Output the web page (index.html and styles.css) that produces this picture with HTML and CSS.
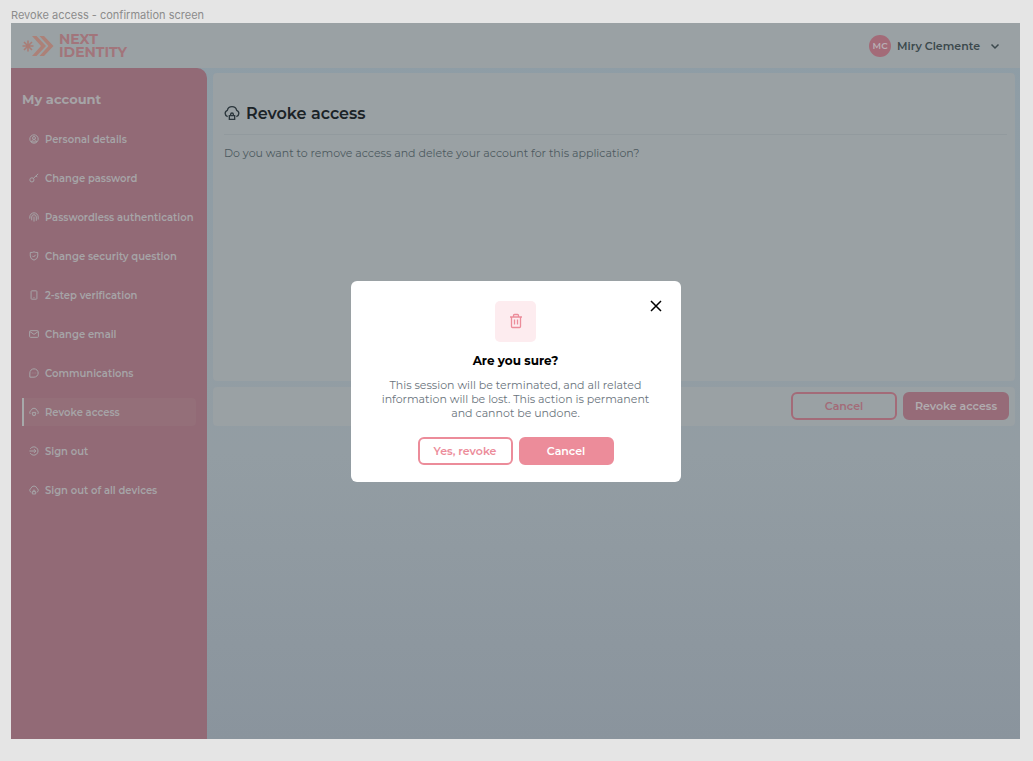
FILE: index.html
```html
<!DOCTYPE html>
<html lang="en">
<head>
<meta charset="utf-8">
<meta name="viewport" content="width=device-width, initial-scale=1">
<title>Revoke access</title>
<link rel="stylesheet" href="styles.css">
</head>
<body>
<svg class="sprite" aria-hidden="true">
  <symbol id="cloud-lock" viewBox="0 0 24 24"><path d="M5.500 17.500A5 5 0 0 1 5 8a7.200 7.200 0 0 1 14 0 5 5 0 0 1-.5 9.500M8 16h8v5.500H8zM10 16v-2a2 2 0 0 1 4 0v2"/></symbol>
  <symbol id="cloud-key" viewBox="0 0 24 24"><path d="M3.500 17A5 5 0 0 1 5 8.500a7.200 7.200 0 0 1 14 0 5 5 0 0 1 1.500 8.500M8 13h8v4a4 4 0 0 1-8 0zM12 16v2"/></symbol>
  <symbol id="user" viewBox="0 0 24 24"><circle cx="12" cy="12" r="10"/><circle cx="12" cy="9.500" r="3.500"/><path d="M6 19c0-7 12-7 12 0z"/></symbol>
  <symbol id="key" viewBox="0 0 24 24"><circle cx="7" cy="16.500" r="5"/><path d="M10.500 13 22 2M17 7l3 3"/></symbol>
  <symbol id="finger" viewBox="0 0 24 24"><path d="M2 16v-4a10 10 0 0 1 20 0v6M6.500 20v-8a5.500 5.500 0 0 1 11 0v9M12 11v12"/></symbol>
  <symbol id="shield" viewBox="0 0 24 24"><path d="M3 3.500Q8 4 12 2q4 2 9 1.500V12q0 7-9 10-9-3-9-10zM8 11.500l3 3 5-5.500"/></symbol>
  <symbol id="phone" viewBox="0 0 24 24"><rect x="5" y="2" width="14" height="20" rx="1.500"/><path d="M11 18h2"/></symbol>
  <symbol id="mail" viewBox="0 0 24 24"><rect x="1.500" y="4" width="21" height="16" rx="2"/><path d="m2 6 10 7 10-7"/></symbol>
  <symbol id="chat" viewBox="0 0 24 24"><path d="M2 22V12a10 10 0 1 1 10 10zM7 12h1M11.500 12h1M16 12h1"/></symbol>
  <symbol id="exit" viewBox="0 0 24 24"><path d="M3 7a10 10 0 1 1 0 10M1 12h15M12 7.500l4.500 4.500-4.500 4.500"/></symbol>
</svg>
<p class="frame-title">Revoke access - confirmation screen</p>
<div class="screen">
  <header class="topbar">
    <a class="logo" href="#" aria-label="Next Identity">
      <svg class="mark" viewBox="0 0 32 22" aria-hidden="true">
        <g stroke="#a97d76" stroke-width="1.600"><path d="M6 5.500v11M.5 11h11M2 7l8 8M10 7l-8 8"/></g>
        <path fill="#ac8178" d="M10 1h4.500L24 11l-9.500 10H10l9-10zM17.500 1H22l9.500 10L22 21h-4.500l9-10z"/>
      </svg>
      <span class="wordmark"><span>NEXT</span><span>IDENTITY</span></span>
    </a>
    <button class="profile" type="button"><span class="avatar">MC</span>Miry Clemente<svg class="chevron" viewBox="0 0 10 10" aria-hidden="true"><path d="m1.500 3.500 3.500 3.500 3.500-3.500"/></svg></button>
  </header>
  <div class="layout">
    <nav class="sidebar" aria-label="My account">
      <h2>My account</h2>
      <ul>
        <li><a href="#"><svg><use href="#user"/></svg>Personal details</a></li>
        <li><a href="#"><svg><use href="#key"/></svg>Change password</a></li>
        <li><a href="#"><svg><use href="#finger"/></svg>Passwordless authentication</a></li>
        <li><a href="#"><svg><use href="#shield"/></svg>Change security question</a></li>
        <li><a href="#"><svg><use href="#phone"/></svg>2-step verification</a></li>
        <li><a href="#"><svg><use href="#mail"/></svg>Change email</a></li>
        <li><a href="#"><svg><use href="#chat"/></svg>Communications</a></li>
        <li><a class="active" href="#" aria-current="page"><svg><use href="#cloud-key"/></svg>Revoke access</a></li>
        <li><a href="#"><svg><use href="#exit"/></svg>Sign out</a></li>
        <li><a href="#"><svg><use href="#cloud-lock"/></svg>Sign out of all devices</a></li>
      </ul>
    </nav>
    <main class="content">
      <section class="panel">
        <h1><svg><use href="#cloud-lock"/></svg>Revoke access</h1>
        <p>Do you want to remove access and delete your account for this application?</p>
      </section>
      <div class="actions">
        <button class="btn outline" type="button">Cancel</button>
        <button class="btn solid" type="button">Revoke access</button>
      </div>
    </main>
  </div>
  <div class="overlay">
    <div class="dialog" role="dialog" aria-modal="true" aria-labelledby="dialog-title">
      <button class="close" type="button" aria-label="Close"><svg viewBox="0 0 12 12"><path d="m1 1 10 10M11 1 1 11"/></svg></button>
      <div class="tile"><svg viewBox="0 0 14 16" aria-hidden="true"><path d="M1 4h12M2.500 4v9.500q0 1 1 1h7q1 0 1-1V4M4.500 4V2.500q0-1 1-1h3q1 0 1 1V4M5.500 6.500v5M8.500 6.500v5"/></svg></div>
      <h2 id="dialog-title">Are you sure?</h2>
      <p>This session will be terminated, and all related information will be lost. This action is permanent and cannot be undone.</p>
      <div class="choices">
        <button class="btn outline" type="button">Yes, revoke</button>
        <button class="btn solid" type="button">Cancel</button>
      </div>
    </div>
  </div>
</div>
</body>
</html>
```
FILE: styles.css
```css
* { box-sizing: border-box; }
body {
  margin: 0;
  min-height: 100vh;
  display: flex;
  flex-direction: column;
  padding: 8px 13px 22px 11px;
  background: #e5e5e5;
  font-family: Montserrat, Inter, sans-serif;
  font-size: 11px;
}
h1, h2, p, ul { margin: 0; padding: 0; }
ul { list-style: none; }
a { color: inherit; text-decoration: none; }
button { font: inherit; cursor: pointer; }
svg { fill: none; stroke: currentColor; stroke-width: 2; flex: none; }
.sprite { position: absolute; width: 0; height: 0; }
.frame-title { font: 11px/15px Inter, sans-serif; color: #8c8c8c; }
.screen {
  position: relative;
  flex: 1;
  display: flex;
  flex-direction: column;
  background: linear-gradient(#8e9da6, #939da3 60%, #8a949d);
}
.topbar {
  height: 45px;
  display: flex;
  align-items: center;
  justify-content: space-between;
  padding: 0 20px 0 11px;
  background: #9aa1a4;
}
.logo { display: flex; align-items: center; gap: 5px; }
.mark { width: 32px; height: 22px; stroke: none; }
.wordmark { display: grid; font-size: 14px; line-height: 13px; font-weight: 700; color: #a2757b; }
.profile {
  display: flex;
  align-items: center;
  gap: 6px;
  padding: 0;
  border: 0;
  background: none;
  color: #3c494d;
  font-weight: 600;
}
.avatar {
  width: 22px;
  height: 22px;
  border-radius: 50%;
  background: #a36b78;
  color: #b9b0b5;
  font-size: 9px;
  line-height: 22px;
  text-align: center;
}
.chevron { width: 10px; height: 10px; margin-left: 4px; }
.chevron path { stroke-width: 1.5px; }
.layout { flex: 1; display: flex; }
.sidebar {
  flex: 0 0 196px;
  padding: 21px 11px;
  border-radius: 0 10px 0 0;
  background: #926a76;
  color: #a6a4a7;
}
.sidebar h2 { font-size: 13px; line-height: 20px; font-weight: 700; margin-bottom: 16px; }
.sidebar ul { display: grid; gap: 11px; }
.sidebar a {
  display: flex;
  align-items: center;
  gap: 6px;
  height: 28px;
  padding-left: 5px;
  border-left: 2px solid transparent;
  border-radius: 0 4px 4px 0;
  font-size: 10px;
  font-weight: 600;
  white-space: nowrap;
}
.sidebar svg { width: 10px; height: 10px; stroke-width: 2.4; }
.sidebar .active { background: #946f79; border-left-color: #a7a9aa; }
.content {
  flex: 1;
  display: flex;
  flex-direction: column;
  gap: 6px;
  padding: 5px 5px 0 6px;
}
.panel, .actions { background: #9aa1a4; border-radius: 4px; }
.panel { min-height: 308px; padding: 26px 8px 12px 11px; }
.panel h1 {
  display: flex;
  align-items: center;
  gap: 6px;
  height: 36px;
  padding-bottom: 7px;
  margin-bottom: 10px;
  border-bottom: 1px solid #929a9e;
  font-size: 16px;
  font-weight: 600;
  color: #1b2327;
}
.panel h1 svg { width: 16px; height: 16px; color: #2b363c; }
.panel p { line-height: 16px; color: #4d5a60; }
.actions { display: flex; justify-content: flex-end; gap: 6px; padding: 5px 6px 6px; }
.btn {
  width: 106px;
  height: 28px;
  padding: 0;
  border: 2px solid #a36b78;
  border-radius: 6px;
  font-weight: 600;
}
.outline { background: none; color: #a36b78; }
.solid { background: #966b78; border-color: #966b78; color: #b0acaf; }
.overlay { position: absolute; inset: 0; display: grid; place-items: center; }
.dialog {
  position: relative;
  width: 330px;
  padding: 20px 27px 17px;
  border-radius: 6px;
  background: #fff;
  text-align: center;
}
.close {
  position: absolute;
  top: 19px;
  right: 19px;
  width: 12px;
  height: 12px;
  padding: 0;
  border: 0;
  background: none;
  color: #000;
}
.close svg { display: block; width: 12px; height: 12px; stroke-width: 1.5px; }
.tile {
  width: 41px;
  height: 41px;
  margin: 0 auto 10px;
  display: grid;
  place-items: center;
  border-radius: 5px;
  background: #fdecef;
  color: #ec8c9a;
}
.tile svg { width: 14px; height: 16px; stroke-width: 1.3px; }
.dialog h2 { font-size: 12px; line-height: 18px; font-weight: 700; margin-bottom: 8px; }
.dialog p { line-height: 14px; color: #6a747d; }
.choices { display: flex; justify-content: center; gap: 6px; margin-top: 17px; }
.choices .btn { width: 95px; border-color: #ec8c9a; }
.choices .outline { color: #ec8c9a; }
.choices .solid { background: #ec8c9a; color: #fff; }
```
